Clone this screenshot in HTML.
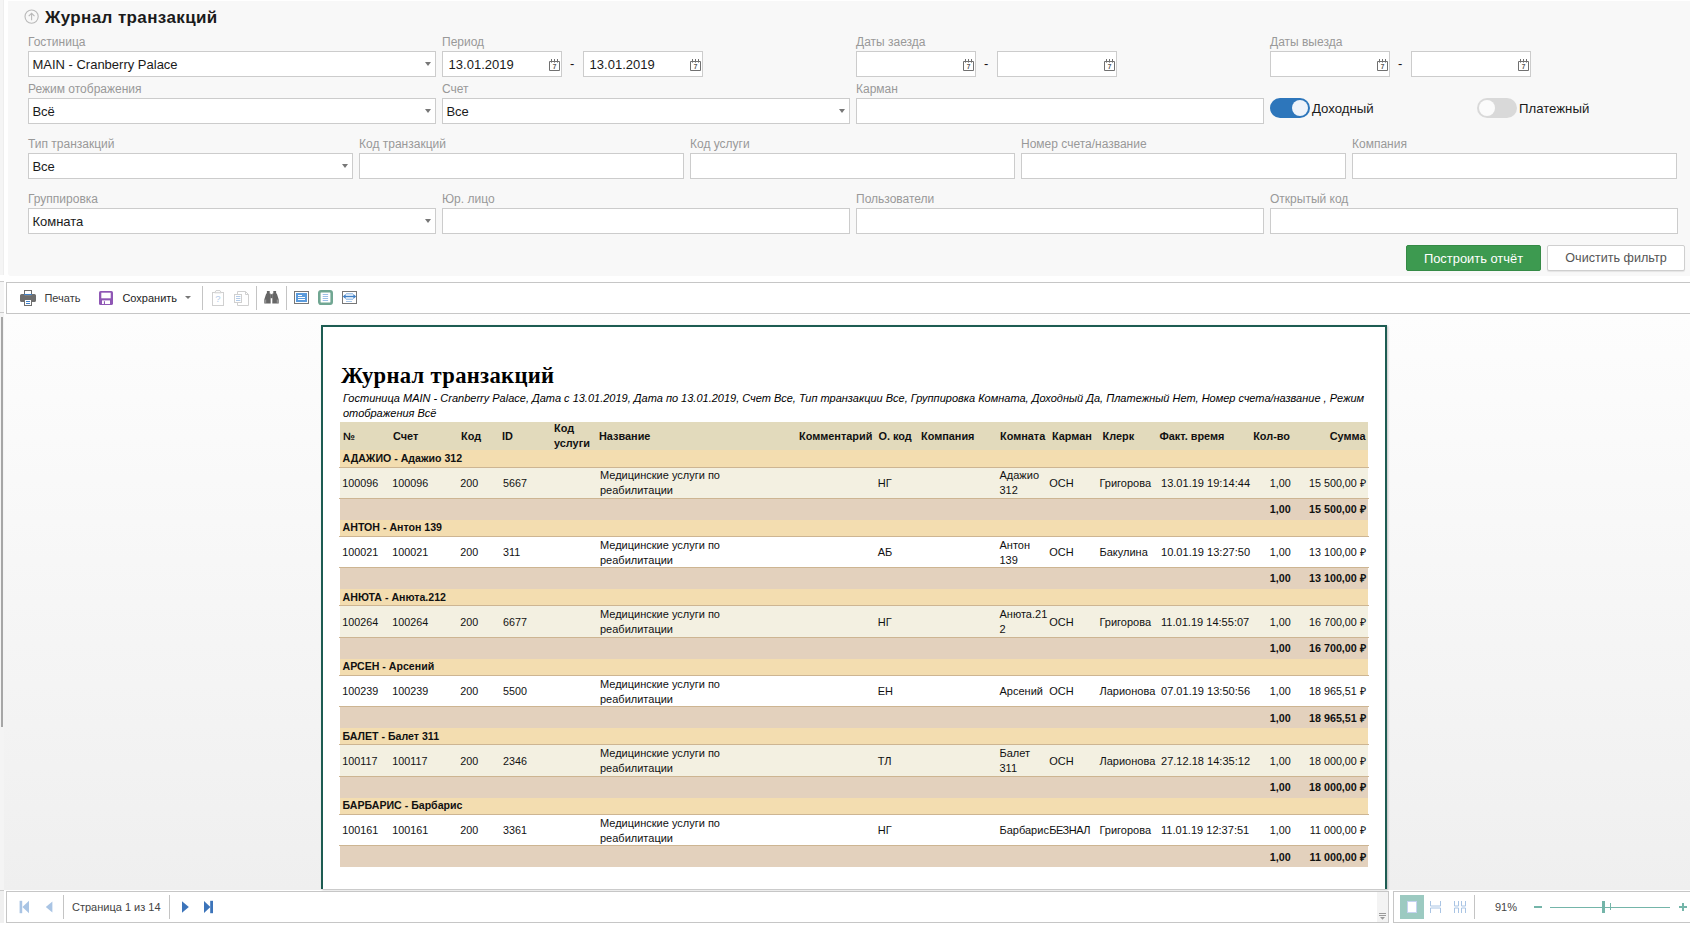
<!DOCTYPE html>
<html lang="ru"><head><meta charset="utf-8"><title>Журнал транзакций</title>
<style>
*{box-sizing:border-box;margin:0;padding:0}
html,body{width:1690px;height:925px;overflow:hidden;background:#fff}
body{position:relative;font-family:"Liberation Sans",sans-serif;color:#222}
.abs{position:absolute}
#panel{position:absolute;left:8px;top:1px;width:1682px;height:275px;background:#f8f8f8;border-radius:0 0 0 3px}
#lstrip{position:absolute;left:0;top:0;width:4px;height:275px;background:#f5f5f5;border-right:1px solid #eee}
.title{position:absolute;left:45px;top:6.6px;font-weight:bold;font-size:17px;letter-spacing:.38px;line-height:22px;color:#1b1b1b;white-space:nowrap}
.lbl{position:absolute;font-size:12px;line-height:14px;color:#999;white-space:nowrap}
.inp{position:absolute;height:26px;background:#fff;border:1px solid #ccc;font-size:13px;line-height:25px;padding-left:3.4px;color:#1a1a1a;white-space:nowrap}
.inp.d{padding-left:5.6px}
.arr{position:absolute;right:4px;top:10px;width:0;height:0;border-left:3px solid transparent;border-right:3px solid transparent;border-top:4px solid #777}
.cal{position:absolute;right:1px;top:6px;width:11px;height:13px}
.dash{position:absolute;font-size:13px;line-height:24px;color:#111}
.tog{position:absolute;width:40px;height:20px;border-radius:10px}
.tog i{position:absolute;top:2px;width:16px;height:16px;border-radius:8px;background:#eef3fa}
.togl{position:absolute;font-size:13.2px;line-height:20px;color:#1a1a1a;white-space:nowrap}
.btn{position:absolute;top:245px;height:26px;border-radius:2px;font-size:12.6px;line-height:25.4px;text-align:center;white-space:nowrap}
#tb{position:absolute;left:6px;top:282px;width:1700px;height:32px;background:#fff;border:1px solid #c6c6c6}
.tbt{position:absolute;font-size:11px;line-height:14px;color:#333;white-space:nowrap}
.sep{position:absolute;width:1px;background:#c4c4c4}
#viewer{position:absolute;left:4px;top:314px;width:1686px;height:576px;background:linear-gradient(#fdfdfd,#efefef)}
#page{position:absolute;left:321px;top:325px;width:1066px;height:564px;background:#fff;border:2px solid #1d5c52;border-bottom:none;box-shadow:1px 1px 2px rgba(0,0,0,.22)}
.rt{position:absolute;left:341px;top:363px;font-family:"Liberation Serif",serif;font-weight:bold;font-size:22.6px;line-height:26px;letter-spacing:.32px;color:#000;white-space:nowrap}
.rs{position:absolute;left:343px;top:391px;width:1030px;font-style:italic;font-size:11px;line-height:14.5px;color:#000}
.row{position:absolute;left:340px;width:1028px}
.c{position:absolute;font-size:11px;line-height:14.7px;color:#111;white-space:nowrap}
.b{font-weight:bold}
.h{font-weight:bold;font-size:10.9px}
.g{font-weight:bold;font-size:10.6px}
.hh{line-height:15px}
.n{font-size:10.75px}
.t{font-size:11.05px}
.p{letter-spacing:-.5px}
.ln{height:1px;left:339px!important;width:1030px!important;background:#cdb592}
.r{text-align:right}
#sb1{position:absolute;left:6px;top:891px;width:1383px;height:32px;background:#fff;border:1px solid #c6c6c6}
#sb2{position:absolute;left:1393px;top:891px;width:320px;height:32px;background:#fff;border:1px solid #c6c6c6}
</style></head>
<body>
<div id="lstrip"></div>
<div id="panel"></div>
<svg class="abs" style="left:24px;top:9px" width="16" height="16" viewBox="0 0 16 16"><circle cx="7.6" cy="7.6" r="6.6" fill="none" stroke="#b9b9b9" stroke-width="1.1"/><path d="M7.6 11.2V4.4M4.7 7.2L7.6 4.3L10.5 7.2" fill="none" stroke="#b9b9b9" stroke-width="1.1"/></svg>
<div class="title">Журнал транзакций</div>
<div class="lbl" style="left:28px;top:35px">Гостиница</div>
<div class="inp" style="left:28px;top:51px;width:408px">MAIN - Cranberry Palace<i class="arr"></i></div>
<div class="lbl" style="left:442px;top:35px">Период</div>
<div class="inp d" style="left:442px;top:51px;width:120px">13.01.2019<svg class="cal" viewBox="0 0 11 13"><path d="M0.5 3.5h10v9h-10z" fill="#fff" stroke="#707070" stroke-width="1"/><path d="M2.5 1v3.6M5.5 1v3.6M8.5 1v3.6" stroke="#707070" stroke-width="1"/><text x="5.5" y="11" font-size="6.5" font-family="Liberation Sans,sans-serif" font-weight="bold" text-anchor="middle" fill="#555">7</text></svg></div>
<div class="dash" style="left:570px;top:52px">-</div>
<div class="inp d" style="left:583px;top:51px;width:120px">13.01.2019<svg class="cal" viewBox="0 0 11 13"><path d="M0.5 3.5h10v9h-10z" fill="#fff" stroke="#707070" stroke-width="1"/><path d="M2.5 1v3.6M5.5 1v3.6M8.5 1v3.6" stroke="#707070" stroke-width="1"/><text x="5.5" y="11" font-size="6.5" font-family="Liberation Sans,sans-serif" font-weight="bold" text-anchor="middle" fill="#555">7</text></svg></div>
<div class="lbl" style="left:856px;top:35px">Даты заезда</div>
<div class="inp d" style="left:856px;top:51px;width:120px"><svg class="cal" viewBox="0 0 11 13"><path d="M0.5 3.5h10v9h-10z" fill="#fff" stroke="#707070" stroke-width="1"/><path d="M2.5 1v3.6M5.5 1v3.6M8.5 1v3.6" stroke="#707070" stroke-width="1"/><text x="5.5" y="11" font-size="6.5" font-family="Liberation Sans,sans-serif" font-weight="bold" text-anchor="middle" fill="#555">7</text></svg></div>
<div class="dash" style="left:984px;top:52px">-</div>
<div class="inp d" style="left:997px;top:51px;width:120px"><svg class="cal" viewBox="0 0 11 13"><path d="M0.5 3.5h10v9h-10z" fill="#fff" stroke="#707070" stroke-width="1"/><path d="M2.5 1v3.6M5.5 1v3.6M8.5 1v3.6" stroke="#707070" stroke-width="1"/><text x="5.5" y="11" font-size="6.5" font-family="Liberation Sans,sans-serif" font-weight="bold" text-anchor="middle" fill="#555">7</text></svg></div>
<div class="lbl" style="left:1270px;top:35px">Даты выезда</div>
<div class="inp d" style="left:1270px;top:51px;width:120px"><svg class="cal" viewBox="0 0 11 13"><path d="M0.5 3.5h10v9h-10z" fill="#fff" stroke="#707070" stroke-width="1"/><path d="M2.5 1v3.6M5.5 1v3.6M8.5 1v3.6" stroke="#707070" stroke-width="1"/><text x="5.5" y="11" font-size="6.5" font-family="Liberation Sans,sans-serif" font-weight="bold" text-anchor="middle" fill="#555">7</text></svg></div>
<div class="dash" style="left:1398px;top:52px">-</div>
<div class="inp d" style="left:1411px;top:51px;width:120px"><svg class="cal" viewBox="0 0 11 13"><path d="M0.5 3.5h10v9h-10z" fill="#fff" stroke="#707070" stroke-width="1"/><path d="M2.5 1v3.6M5.5 1v3.6M8.5 1v3.6" stroke="#707070" stroke-width="1"/><text x="5.5" y="11" font-size="6.5" font-family="Liberation Sans,sans-serif" font-weight="bold" text-anchor="middle" fill="#555">7</text></svg></div>
<div class="lbl" style="left:28px;top:82px">Режим отображения</div>
<div class="inp" style="left:28px;top:98px;width:408px">Всё<i class="arr"></i></div>
<div class="lbl" style="left:442px;top:82px">Счет</div>
<div class="inp" style="left:442px;top:98px;width:408px">Все<i class="arr"></i></div>
<div class="lbl" style="left:856px;top:82px">Карман</div>
<div class="inp" style="left:856px;top:98px;width:408px"></div>
<div class="tog" style="left:1270px;top:98px;background:#2d76bb"><i style="left:22px"></i></div><div class="togl" style="left:1312px;top:99px">Доходный</div>
<div class="tog" style="left:1477px;top:98px;background:#d9d9d9"><i style="left:2px;background:#fbfbfb"></i></div><div class="togl" style="left:1519px;top:99px">Платежный</div>
<div class="lbl" style="left:28px;top:137px">Тип транзакций</div>
<div class="inp" style="left:28px;top:153px;width:325px">Все<i class="arr"></i></div>
<div class="lbl" style="left:359px;top:137px">Код транзакций</div>
<div class="inp" style="left:359px;top:153px;width:325px"></div>
<div class="lbl" style="left:690px;top:137px">Код услуги</div>
<div class="inp" style="left:690px;top:153px;width:325px"></div>
<div class="lbl" style="left:1021px;top:137px">Номер счета/название</div>
<div class="inp" style="left:1021px;top:153px;width:325px"></div>
<div class="lbl" style="left:1352px;top:137px">Компания</div>
<div class="inp" style="left:1352px;top:153px;width:325px"></div>
<div class="lbl" style="left:28px;top:192px">Группировка</div>
<div class="inp" style="left:28px;top:208px;width:408px">Комната<i class="arr"></i></div>
<div class="lbl" style="left:442px;top:192px">Юр. лицо</div>
<div class="inp" style="left:442px;top:208px;width:408px"></div>
<div class="lbl" style="left:856px;top:192px">Пользователи</div>
<div class="inp" style="left:856px;top:208px;width:408px"></div>
<div class="lbl" style="left:1270px;top:192px">Открытый код</div>
<div class="inp" style="left:1270px;top:208px;width:408px"></div>
<div class="btn" style="left:1406px;width:135px;background:#3d9a50;border:1px solid #358a46;color:#fff;font-size:12.9px">Построить отчёт</div>
<div class="btn" style="left:1547px;width:138px;background:#fff;border:1px solid #cfcfcf;box-shadow:0 1px 1px rgba(0,0,0,.08);color:#555">Очистить фильтр</div>
<div class="abs" style="left:0;top:281px;width:4px;height:32px;background:#f5f5f5;border-top:1px solid #ccc;border-bottom:1px solid #ccc"></div>
<div class="abs" style="left:0;top:313px;width:4px;height:577px;background:#f4f4f4"></div>
<div class="abs" style="left:1px;top:317px;width:2px;height:410px;background:#a6a6a6"></div>
<div class="abs" style="left:0;top:890px;width:4px;height:33px;background:#f0f0f0;border-top:1px solid #ccc"></div>
<div id="tb"></div>
<svg class="abs" style="left:20px;top:290px" width="16" height="16" viewBox="0 0 16 16"><path d="M1.6 4h2.2l.9 1.2h6.6l.9-1.2h2.2a1.6 1.6 0 0 1 1.6 1.6v4.8a1.6 1.6 0 0 1-1.6 1.6H1.6A1.6 1.6 0 0 1 0 10.4V5.600000000000001A1.6 1.6 0 0 1 1.6 4z" fill="#6e6e6e"/><rect x="4.5" y="0.5" width="7" height="4.6" fill="#fff" stroke="#6e6e6e"/><rect x="4" y="4" width="8" height="1" fill="#3f7fc6"/><rect x="4.5" y="9.5" width="7" height="6" fill="#fff" stroke="#6e6e6e"/><rect x="6" y="11" width="4" height="1" fill="#3f7fc6"/><rect x="6" y="13" width="4" height="1" fill="#3f7fc6"/></svg>
<div class="tbt" style="left:44.4px;top:291px;color:#3a3a3a">Печать</div>
<svg class="abs" style="left:99px;top:291px" width="14" height="14" viewBox="0 0 14 14"><rect x="0" y="0" width="14" height="14" rx="1.6" fill="#8f57b5"/><rect x="2.3" y="1.7" width="9.4" height="5.6" fill="#fff"/><rect x="3" y="9.4" width="8" height="3.6" fill="#fff"/><rect x="4.9" y="10.2" width="1.1" height="2.8" fill="#8f57b5"/></svg>
<div class="tbt" style="left:122.4px;top:291px;color:#1c1c1c">Сохранить</div>
<div class="abs" style="left:185px;top:296px;width:0;height:0;border-left:3px solid transparent;border-right:3px solid transparent;border-top:3px solid #777"></div>
<div class="sep" style="left:202px;top:286px;height:24px"></div>
<svg class="abs" style="left:212px;top:290px" width="12" height="16" viewBox="0 0 12 16"><rect x="0.5" y="2.5" width="11" height="13" fill="#fff" stroke="#d0d0d0"/><path d="M2.6 2.8L4 0.6h4l1.4 2.2z" fill="#fff" stroke="#d0d0d0"/><text x="6" y="12.4" font-size="9.5" font-family="Liberation Sans,sans-serif" text-anchor="middle" fill="#b3cbe8">?</text></svg>
<svg class="abs" style="left:234px;top:291px" width="15" height="15" viewBox="0 0 15 15"><path d="M3.5 0.5h8l3 3v11h-11z" fill="#fff" stroke="#d0d0d0"/><path d="M11.5 0.5v3h3" fill="none" stroke="#d0d0d0"/><rect x="0.5" y="3.5" width="7" height="8" fill="#fff" stroke="#d0d0d0"/><path d="M2 5.5h4.4M2 7.5h4.4M2 9.5h4.4" stroke="#b3cbe8"/></svg>
<div class="sep" style="left:256px;top:286px;height:24px"></div>
<svg class="abs" style="left:264px;top:291px" width="15" height="13" viewBox="0 0 15 13"><path d="M2.9 0h2.8v2.6h.9l.1 10H.3V8.4L2.2 2.6h.7zM9.3 0h2.8v2.6h.7l1.9 5.8v4.2H8.3l.1-10h.9z" fill="#666"/><rect x="6.4" y="3.2" width="2.2" height="4" fill="#666"/><path d="M1.7 8.6v3.2M13.3 8.6v3.2" stroke="#b0b0b0" stroke-width=".8"/></svg>
<div class="sep" style="left:286px;top:286px;height:24px"></div>
<svg class="abs" style="left:294px;top:291px" width="15" height="13" viewBox="0 0 15 13"><rect x="0.5" y="0.5" width="14" height="12" fill="#fff" stroke="#777"/><rect x="2" y="2" width="11" height="9" fill="#5b9bdc"/><path d="M4 4.5h4M4 6.5h7M4 8.5h7" stroke="#fff" stroke-width="1"/></svg>
<svg class="abs" style="left:318px;top:290px" width="15" height="15" viewBox="0 0 15 15"><rect x="1.3" y="1.3" width="12.4" height="12.4" rx="1.6" fill="#fff" stroke="#70a692" stroke-width="2.6"/><path d="M4.7 4.5h5.4M4.7 6.5h5.4M4.7 8.5h5.4M4.7 10.5h5.4" stroke="#9cbfe6" stroke-width="1"/></svg>
<svg class="abs" style="left:342px;top:291px" width="15" height="13" viewBox="0 0 15 13"><rect x="0.5" y="0.5" width="14" height="12" fill="#fff" stroke="#777"/><path d="M4 2.5h7M4 4h7M4 7h7M4 8.5h7M4 10.5h6" stroke="#9cbfe6" stroke-width=".9"/><path d="M0.8 5.5L3.7 3v5zM14.2 5.5L11.3 3v5z" fill="#3f7fc6"/><path d="M3 5.5h9" stroke="#3f7fc6" stroke-width="1"/></svg>
<div id="viewer"></div>
<div id="page"></div>
<div class="rt">Журнал транзакций</div>
<div class="rs">Гостиница MAIN - Cranberry Palace, Дата с 13.01.2019, Дата по 13.01.2019, Счет Все, Тип транзакции Все, Группировка Комната, Доходный Да, Платежный Нет, Номер счета/название , Режим отображения Всё</div>
<div class="row" style="top:422px;height:28px;background:#e2dabc"></div>
<div class="c h" style="left:343px;top:429px">№</div>
<div class="c h" style="left:393px;top:429px">Счет</div>
<div class="c h" style="left:461px;top:429px">Код</div>
<div class="c h" style="left:502px;top:429px">ID</div>
<div class="c h" style="left:599px;top:429px">Название</div>
<div class="c h" style="left:799px;top:429px">Комментарий</div>
<div class="c h" style="left:878.5px;top:429px">О. код</div>
<div class="c h" style="left:921px;top:429px">Компания</div>
<div class="c h" style="left:1000px;top:429px">Комната</div>
<div class="c h" style="left:1052px;top:429px">Карман</div>
<div class="c h" style="left:1102.5px;top:429px">Клерк</div>
<div class="c h" style="left:1159.5px;top:429px">Факт. время</div>
<div class="c h hh" style="left:554px;top:421.2px">Код<br>услуги</div>
<div class="c h r" style="left:1170px;width:120px;top:429px">Кол-во</div>
<div class="c h r" style="left:1245.5px;width:120px;top:429px">Сумма</div>
<div class="row" style="top:450px;height:17px;background:#f3ddb0"></div>
<div class="row ln" style="top:467px"></div>
<div class="row" style="top:468px;height:30px;background:#f3f0e1"></div>
<div class="row ln" style="top:498px"></div>
<div class="row" style="top:499px;height:21px;background:#e3d1bd"></div>
<div class="c g" style="left:342.6px;top:451px">АДАЖИО - Адажио 312</div>
<div class="c n" style="left:342.3px;top:475.7px">100096</div>
<div class="c n" style="left:392.3px;top:475.7px">100096</div>
<div class="c n" style="left:460.3px;top:475.7px">200</div>
<div class="c n" style="left:503px;top:475.7px">5667</div>
<div class="c" style="left:600px;top:468.0px">Медицинские услуги по<br>реабилитации</div>
<div class="c" style="left:877.7px;top:475.7px">НГ</div>
<div class="c" style="left:999.5px;top:468.0px">Адажио<br>312</div>
<div class="c" style="left:1049.3px;top:475.7px">ОСН</div>
<div class="c" style="left:1099.5px;top:475.7px">Григорова</div>
<div class="c t" style="left:1161px;top:475.7px">13.01.19 19:14:44</div>
<div class="c n r" style="left:1170.8px;width:120px;top:475.7px">1,00</div>
<div class="c n r" style="left:1245.8px;width:120px;top:475.7px">15 500,00 ₽</div>
<div class="c n b r" style="left:1170.8px;width:120px;top:502.0px">1,00</div>
<div class="c n b r" style="left:1245.8px;width:120px;top:502.0px">15 500,00 ₽</div>
<div class="row" style="top:520px;height:16px;background:#f3ddb0"></div>
<div class="row ln" style="top:536px"></div>
<div class="row" style="top:537px;height:30px;background:#fff"></div>
<div class="row ln" style="top:567px"></div>
<div class="row" style="top:568px;height:21px;background:#e3d1bd"></div>
<div class="c g" style="left:342.6px;top:520px">АНТОН - Антон 139</div>
<div class="c n" style="left:342.3px;top:544.7px">100021</div>
<div class="c n" style="left:392.3px;top:544.7px">100021</div>
<div class="c n" style="left:460.3px;top:544.7px">200</div>
<div class="c n" style="left:503px;top:544.7px">311</div>
<div class="c" style="left:600px;top:538.0px">Медицинские услуги по<br>реабилитации</div>
<div class="c" style="left:877.7px;top:544.7px">АБ</div>
<div class="c" style="left:999.5px;top:538.0px">Антон<br>139</div>
<div class="c" style="left:1049.3px;top:544.7px">ОСН</div>
<div class="c" style="left:1099.5px;top:544.7px">Бакулина</div>
<div class="c t" style="left:1161px;top:544.7px">10.01.19 13:27:50</div>
<div class="c n r" style="left:1170.8px;width:120px;top:544.7px">1,00</div>
<div class="c n r" style="left:1245.8px;width:120px;top:544.7px">13 100,00 ₽</div>
<div class="c n b r" style="left:1170.8px;width:120px;top:571.4px">1,00</div>
<div class="c n b r" style="left:1245.8px;width:120px;top:571.4px">13 100,00 ₽</div>
<div class="row" style="top:589px;height:16px;background:#f3ddb0"></div>
<div class="row ln" style="top:605px"></div>
<div class="row" style="top:606px;height:31px;background:#f3f0e1"></div>
<div class="row ln" style="top:637px"></div>
<div class="row" style="top:638px;height:21px;background:#e3d1bd"></div>
<div class="c g" style="left:342.6px;top:589.8px">АНЮТА - Анюта.212</div>
<div class="c n" style="left:342.3px;top:614.7px">100264</div>
<div class="c n" style="left:392.3px;top:614.7px">100264</div>
<div class="c n" style="left:460.3px;top:614.7px">200</div>
<div class="c n" style="left:503px;top:614.7px">6677</div>
<div class="c" style="left:600px;top:607.0px">Медицинские услуги по<br>реабилитации</div>
<div class="c" style="left:877.7px;top:614.7px">НГ</div>
<div class="c" style="left:999.5px;top:607.0px">Анюта.21<br>2</div>
<div class="c" style="left:1049.3px;top:614.7px">ОСН</div>
<div class="c" style="left:1099.5px;top:614.7px">Григорова</div>
<div class="c t" style="left:1161px;top:614.7px">11.01.19 14:55:07</div>
<div class="c n r" style="left:1170.8px;width:120px;top:614.7px">1,00</div>
<div class="c n r" style="left:1245.8px;width:120px;top:614.7px">16 700,00 ₽</div>
<div class="c n b r" style="left:1170.8px;width:120px;top:641.4px">1,00</div>
<div class="c n b r" style="left:1245.8px;width:120px;top:641.4px">16 700,00 ₽</div>
<div class="row" style="top:659px;height:16px;background:#f3ddb0"></div>
<div class="row ln" style="top:675px"></div>
<div class="row" style="top:676px;height:30px;background:#fff"></div>
<div class="row ln" style="top:706px"></div>
<div class="row" style="top:707px;height:21px;background:#e3d1bd"></div>
<div class="c g" style="left:342.6px;top:659px">АРСЕН - Арсений</div>
<div class="c n" style="left:342.3px;top:683.7px">100239</div>
<div class="c n" style="left:392.3px;top:683.7px">100239</div>
<div class="c n" style="left:460.3px;top:683.7px">200</div>
<div class="c n" style="left:503px;top:683.7px">5500</div>
<div class="c" style="left:600px;top:677.0px">Медицинские услуги по<br>реабилитации</div>
<div class="c" style="left:877.7px;top:683.7px">ЕН</div>
<div class="c" style="left:999.5px;top:683.7px">Арсений</div>
<div class="c" style="left:1049.3px;top:683.7px">ОСН</div>
<div class="c" style="left:1099.5px;top:683.7px">Ларионова</div>
<div class="c t" style="left:1161px;top:683.7px">07.01.19 13:50:56</div>
<div class="c n r" style="left:1170.8px;width:120px;top:683.7px">1,00</div>
<div class="c n r" style="left:1245.8px;width:120px;top:683.7px">18 965,51 ₽</div>
<div class="c n b r" style="left:1170.8px;width:120px;top:711.4px">1,00</div>
<div class="c n b r" style="left:1245.8px;width:120px;top:711.4px">18 965,51 ₽</div>
<div class="row" style="top:728px;height:16px;background:#f3ddb0"></div>
<div class="row ln" style="top:744px"></div>
<div class="row" style="top:745px;height:31px;background:#f3f0e1"></div>
<div class="row ln" style="top:776px"></div>
<div class="row" style="top:777px;height:21px;background:#e3d1bd"></div>
<div class="c g" style="left:342.6px;top:728.8px">БАЛЕТ - Балет 311</div>
<div class="c n" style="left:342.3px;top:753.7px">100117</div>
<div class="c n" style="left:392.3px;top:753.7px">100117</div>
<div class="c n" style="left:460.3px;top:753.7px">200</div>
<div class="c n" style="left:503px;top:753.7px">2346</div>
<div class="c" style="left:600px;top:746.0px">Медицинские услуги по<br>реабилитации</div>
<div class="c" style="left:877.7px;top:753.7px">ТЛ</div>
<div class="c" style="left:999.5px;top:746.0px">Балет<br>311</div>
<div class="c" style="left:1049.3px;top:753.7px">ОСН</div>
<div class="c" style="left:1099.5px;top:753.7px">Ларионова</div>
<div class="c t" style="left:1161px;top:753.7px">27.12.18 14:35:12</div>
<div class="c n r" style="left:1170.8px;width:120px;top:753.7px">1,00</div>
<div class="c n r" style="left:1245.8px;width:120px;top:753.7px">18 000,00 ₽</div>
<div class="c n b r" style="left:1170.8px;width:120px;top:780.4px">1,00</div>
<div class="c n b r" style="left:1245.8px;width:120px;top:780.4px">18 000,00 ₽</div>
<div class="row" style="top:798px;height:16px;background:#f3ddb0"></div>
<div class="row ln" style="top:814px"></div>
<div class="row" style="top:815px;height:30px;background:#fff"></div>
<div class="row ln" style="top:845px"></div>
<div class="row" style="top:846px;height:21px;background:#e3d1bd"></div>
<div class="c g" style="left:342.6px;top:798px">БАРБАРИС - Барбарис</div>
<div class="c n" style="left:342.3px;top:822.7px">100161</div>
<div class="c n" style="left:392.3px;top:822.7px">100161</div>
<div class="c n" style="left:460.3px;top:822.7px">200</div>
<div class="c n" style="left:503px;top:822.7px">3361</div>
<div class="c" style="left:600px;top:816.0px">Медицинские услуги по<br>реабилитации</div>
<div class="c" style="left:877.7px;top:822.7px">НГ</div>
<div class="c" style="left:999.5px;top:822.7px">Барбарис</div>
<div class="c p" style="left:1049.3px;top:822.7px">БЕЗНАЛ</div>
<div class="c" style="left:1099.5px;top:822.7px">Григорова</div>
<div class="c t" style="left:1161px;top:822.7px">11.01.19 12:37:51</div>
<div class="c n r" style="left:1170.8px;width:120px;top:822.7px">1,00</div>
<div class="c n r" style="left:1245.8px;width:120px;top:822.7px">11 000,00 ₽</div>
<div class="c n b r" style="left:1170.8px;width:120px;top:850.4px">1,00</div>
<div class="c n b r" style="left:1245.8px;width:120px;top:850.4px">11 000,00 ₽</div>
<div id="sb1"></div><div id="sb2"></div>
<div class="abs" style="left:1377px;top:892px;width:11px;height:30px;background:#f3f3f3"></div>
<svg class="abs" style="left:1379px;top:913px" width="7" height="7" viewBox="0 0 7 7"><path d="M0 .5h7M0 2.5h7" stroke="#9a9a9a" stroke-width="1"/><path d="M1 4h5L3.5 6.8z" fill="#9a9a9a"/></svg>
<svg class="abs" style="left:19px;top:900px" width="11" height="14" viewBox="0 0 11 14"><rect x="0.6" y="0.8" width="2.6" height="12.4" fill="#a9c4e4"/><path d="M10 0.8v12.4L3.4 7z" fill="#a9c4e4"/></svg>
<svg class="abs" style="left:45px;top:900px" width="8" height="14" viewBox="0 0 8 14"><path d="M7.4 1.6v10.8L0.8 7z" fill="#a9c4e4"/></svg>
<div class="sep" style="left:63px;top:895px;height:24px"></div>
<div class="tbt" style="left:72px;top:900px;color:#444">Страница 1 из 14</div>
<div class="sep" style="left:169px;top:895px;height:24px"></div>
<svg class="abs" style="left:181px;top:900px" width="8" height="14" viewBox="0 0 8 14"><path d="M1 1.2v11.6L7.8 7z" fill="#3c74ba"/></svg>
<svg class="abs" style="left:203px;top:900px" width="11" height="14" viewBox="0 0 11 14"><path d="M1 1v12L7.4 7z" fill="#3c74ba"/><rect x="7.2" y="0.8" width="2.8" height="12.4" fill="#3c74ba"/></svg>
<div class="abs" style="left:1400px;top:895px;width:24px;height:24px;background:#9ccac1"></div>
<div class="abs" style="left:1407px;top:901px;width:10px;height:12px;background:#fff;border:1px solid #c5d3f0"></div>
<svg class="abs" style="left:1430px;top:901px" width="11" height="12" viewBox="0 0 11 12"><path d="M0.5 0v5h10V0M0.5 12V7h10V12" fill="none" stroke="#a9c4e4" stroke-width="1"/></svg>
<svg class="abs" style="left:1454px;top:901px" width="12" height="12" viewBox="0 0 12 12"><path d="M0.5 0v5h4V0M7.5 0v5h4V0M0.5 12V7h4V12M7.5 12V7h4V12" fill="none" stroke="#a9c4e4" stroke-width="1"/></svg>
<div class="sep" style="left:1474px;top:895px;height:24px"></div>
<div class="tbt" style="left:1495px;top:900px;color:#444">91%</div>
<div class="abs" style="left:1534px;top:906px;width:8px;height:2px;background:#74b5a9"></div>
<div class="abs" style="left:1550px;top:907px;width:120px;height:1px;background:#74b5a9"></div>
<div class="abs" style="left:1602px;top:901px;width:3px;height:12px;background:#74b5a9"></div>
<div class="abs" style="left:1610px;top:903px;width:1px;height:7px;background:#74b5a9"></div>
<div class="abs" style="left:1679px;top:906px;width:8px;height:2px;background:#74b5a9"></div>
<div class="abs" style="left:1682px;top:903px;width:2px;height:8px;background:#74b5a9"></div>
</body></html>
